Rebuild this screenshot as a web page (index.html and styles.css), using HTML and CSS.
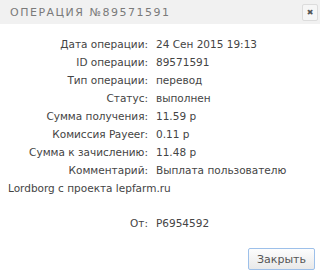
FILE: index.html
```html
<!DOCTYPE html>
<html lang="ru">
<head>
    <meta charset="UTF-8">
    <meta name="viewport" content="width=device-width, initial-scale=1.0">
    <title>Операция</title>
    <link rel="stylesheet" href="styles.css">
</head>
<body>
    <div class="dialog">
        <div class="dialog-header">
            <span class="dialog-title">Операция №89571591</span>
            <span class="dialog-close">&#x2716;</span>
        </div>
        <div class="dialog-body">
            <div class="row"><span class="label">Дата операции:</span>24 Сен 2015 19:13</div>
            <div class="row"><span class="label">ID операции:</span>89571591</div>
            <div class="row"><span class="label">Тип операции:</span>перевод</div>
            <div class="row"><span class="label">Статус:</span>выполнен</div>
            <div class="row"><span class="label">Сумма получения:</span>11.59 р</div>
            <div class="row"><span class="label">Комиссия Payeer:</span>0.11 р</div>
            <div class="row"><span class="label">Сумма к зачислению:</span>11.48 р</div>
            <div class="row"><span class="label">Комментарий:</span>Выплата пользователю<br>Lordborg с проекта lepfarm.ru</div>
            <div class="row empty"></div>
            <div class="row"><span class="label">От:</span>P6954592</div>
        </div>
        <div class="dialog-footer">
            <button type="button" class="btn">Закрыть</button>
        </div>
    </div>
</body>
</html>
```

FILE: styles.css
```css
body {
    margin: 0;
    background-color: #fff;
    font-family: "DejaVu Sans", sans-serif;
    color: #444;
}

.dialog {
    width: 320px;
    height: 275px;
    display: flex;
    flex-direction: column;
}

.dialog-header {
    height: 24px;
    background-color: #f1f1f1;
    display: flex;
    align-items: center;
    justify-content: space-between;
    padding: 0 2px 0 10px;
}

.dialog-title {
    text-transform: uppercase;
    color: #7a7a7a;
    font-size: 11px;
    letter-spacing: 1.5px;
}

.dialog-close {
    width: 14px;
    height: 15px;
    border: 1px solid #dcdcdc;
    border-radius: 2px;
    background-color: #f6f6f6;
    color: #555;
    font-size: 8px;
    display: flex;
    align-items: center;
    justify-content: center;
}

.dialog-body {
    padding: 11px 8px 0 8px;
    font-size: 10.5px;
    line-height: 18px;
}

.row.empty {
    height: 17px;
}

.label {
    display: inline-block;
    width: 140px;
    text-align: right;
    margin-right: 8px;
}

.dialog-footer {
    display: flex;
    justify-content: flex-end;
    padding: 16px 5px 0 0;
}

.btn {
    height: 22px;
    padding: 0 8px;
    border: 1px solid #9dc0ea;
    border-radius: 2px;
    background: linear-gradient(#fdfdfd, #e9e9e9);
    color: #555;
    font-family: "DejaVu Sans", sans-serif;
    font-size: 11px;
}
```
